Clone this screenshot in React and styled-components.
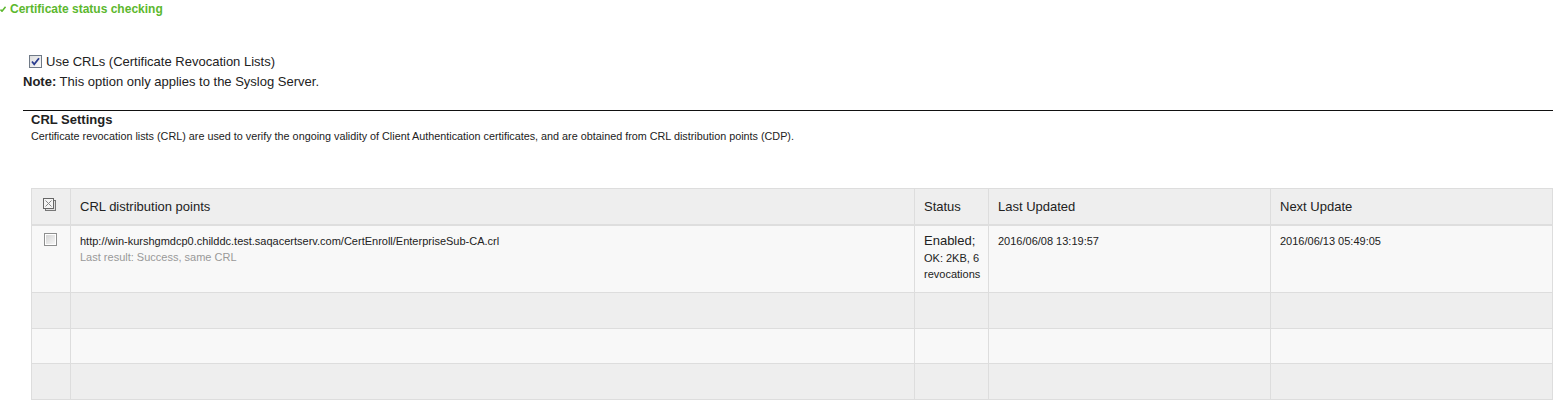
import React from 'react'
import styled, { createGlobalStyle } from 'styled-components';

const GlobalStyle = createGlobalStyle`
  body {
    margin: 0;
    background: #fff;
    font-family: "Liberation Sans", Arial, sans-serif;
    color: #333;
  }
`

const Page = styled.div`
  display: flex;
  flex-direction: column;
  padding-right: 4px;
`

const SectionTitle = styled.div`
  display: flex;
  align-items: center;
  gap: 4px;
  height: 18px;
  font-size: 12px;
  font-weight: bold;
  color: #5cb82e;
`

const Options = styled.div`
  display: flex;
  flex-direction: column;
  margin-top: 33px;
  padding-left: 23px;
`

const CheckRow = styled.label`
  display: flex;
  align-items: center;
  gap: 4px;
  height: 20px;
  padding-left: 6px;
  font-size: 13px;
  color: #222;
`

const Note = styled.div`
  margin-top: 2px;
  font-size: 13px;
  line-height: 18px;
  color: #222;
  b { font-weight: bold; }
`

const Settings = styled.div`
  margin-top: 19px;
  margin-left: 23px;
  border-top: 1px solid #111;
  display: flex;
  flex-direction: column;
`

const SettingsHeading = styled.div`
  padding-left: 8px;
  font-size: 13px;
  font-weight: bold;
  line-height: 18px;
  color: #222;
`

const SettingsDesc = styled.div`
  padding-left: 8px;
  font-size: 10.8px;
  line-height: 14px;
  color: #222;
`

const Table = styled.table`
  margin: 45px 0 0 8px;
  border-collapse: collapse;
  table-layout: fixed;
  width: calc(100% - 8px);
  border: 1px solid #ddd;
`

const Th = styled.th`
  box-sizing: border-box;
  width: ${p => p.w ? p.w + 'px' : 'auto'};
  height: 36px;
  padding: 0 0 0 ${p => p.box ? 11 : 9}px;
  text-align: left;
  font-weight: normal;
  font-size: 13px;
  color: #222;
  background: #eeeeee;
  border: 1px solid #ddd;
  border-bottom: 2px solid #dedede;
`

const Tr = styled.tr`
  background: ${p => p.alt ? '#eeeeee' : '#f8f8f8'};
  height: ${p => p.h}px;
`

const Td = styled.td`
  box-sizing: border-box;
  padding: ${p => p.box ? '7px 0 0 12px' : '7px 2px 0 9px'};
  vertical-align: top;
  border: 1px solid #ddd;
  font-size: 11px;
  line-height: 16px;
  color: #222;
`

const Muted = styled.div`
  color: #999;
`

const StatusMain = styled.div`
  font-size: 13px;
  line-height: 18px;
  margin-top: -1px;
`

const GreenMark = () => (
  <svg width="6" height="6" viewBox="0 0 6 6">
    <path d="M0.5 3.6 L2 5.2 L5.6 0.8" stroke="#5cb82e" strokeWidth="1.6" fill="none" />
  </svg>
)

const CheckedBox = () => (
  <svg width="13" height="13" viewBox="0 0 13 13">
    <defs>
      <linearGradient id="cbg" x1="0" y1="0" x2="1" y2="1">
        <stop offset="0" stopColor="#dcdcdc" />
        <stop offset="1" stopColor="#fbfbfb" />
      </linearGradient>
    </defs>
    <rect x="0.5" y="0.5" width="12" height="12" fill="url(#cbg)" stroke="#707a87" />
    <path d="M3 6.5 L5.2 9.2 L10 3.2" stroke="#2a3c8e" strokeWidth="1.8" fill="none" />
  </svg>
)

const EmptyBox = () => (
  <svg width="13" height="13" viewBox="0 0 13 13">
    <defs>
      <linearGradient id="ebg" x1="0" y1="0" x2="1" y2="1">
        <stop offset="0" stopColor="#d4d4d4" />
        <stop offset="1" stopColor="#f6f6f6" />
      </linearGradient>
    </defs>
    <rect x="0.5" y="0.5" width="12" height="12" fill="#fff" stroke="#8e8f8f" />
    <rect x="2" y="2" width="9" height="9" fill="url(#ebg)" />
  </svg>
)

const SelectAllIcon = () => (
  <svg width="13" height="13" viewBox="0 0 13 13">
    <rect x="2.5" y="2.5" width="10" height="10" fill="#e0e0e0" stroke="#777" />
    <rect x="0.5" y="0.5" width="10" height="10" fill="#f4f4f4" stroke="#666" />
    <path d="M2.5 2.5 L8.5 8.5 M8.5 2.5 L2.5 8.5" stroke="#888" strokeWidth="1" />
  </svg>
)

const rows = [
  { h: 68, alt: false, url: 'http://win-kurshgmdcp0.childdc.test.saqacertserv.com/CertEnroll/EnterpriseSub-CA.crl', last: '2016/06/08 13:19:57', next: '2016/06/13 05:49:05' },
  { h: 36, alt: true },
  { h: 35, alt: false },
  { h: 36, alt: true },
]

export default function App() {
  return (
    <Page>
      <GlobalStyle />
      <SectionTitle><GreenMark />Certificate status checking</SectionTitle>

      <Options>
        <CheckRow><CheckedBox />Use CRLs (Certificate Revocation Lists)</CheckRow>
        <Note><b>Note:</b> This option only applies to the Syslog Server.</Note>
      </Options>

      <Settings>
        <SettingsHeading>CRL Settings</SettingsHeading>
        <SettingsDesc>Certificate revocation lists (CRL) are used to verify the ongoing validity of Client Authentication certificates, and are obtained from CRL distribution points (CDP).</SettingsDesc>

        <Table>
          <thead>
            <tr>
              <Th w={39} box><SelectAllIcon /></Th>
              <Th>CRL distribution points</Th>
              <Th w={74}>Status</Th>
              <Th w={282}>Last Updated</Th>
              <Th w={282}>Next Update</Th>
            </tr>
          </thead>
          <tbody>
            {rows.map((r, i) => (
              <Tr key={i} h={r.h} alt={r.alt}>
                <Td box>{r.url && <EmptyBox />}</Td>
                <Td>
                  {r.url && <>
                    <div>{r.url}</div>
                    <Muted>Last result: Success, same CRL</Muted>
                  </>}
                </Td>
                <Td>
                  {r.url && <>
                    <StatusMain>Enabled;</StatusMain>
                    <div>OK: 2KB, 6 revocations</div>
                  </>}
                </Td>
                <Td>{r.last}</Td>
                <Td>{r.next}</Td>
              </Tr>
            ))}
          </tbody>
        </Table>
      </Settings>
    </Page>
  )
}
